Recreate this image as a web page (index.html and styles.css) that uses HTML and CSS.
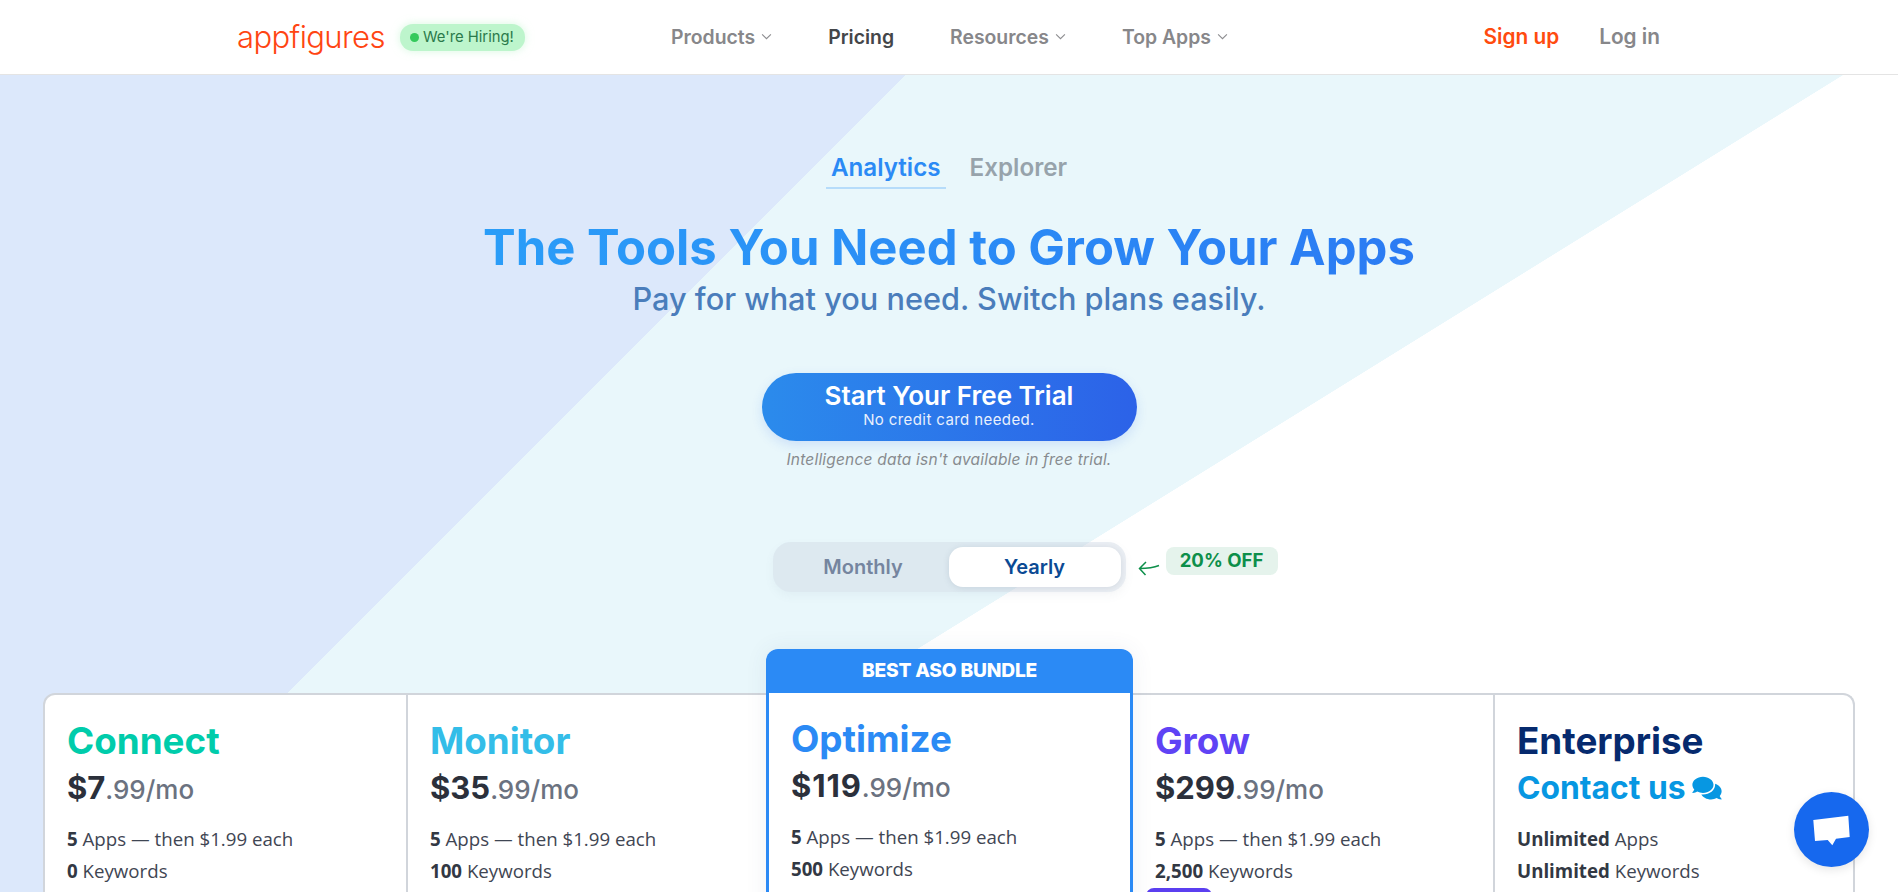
FILE: index.html
```html
<!DOCTYPE html>
<html lang="en">
<head>
<meta charset="utf-8">
<title>Appfigures Pricing</title>
<link rel="stylesheet" href="styles.css">
</head>
<body>
<header class="nav">
  <a class="logo">appfigures</a>
  <span class="hiring"><i class="hiring-dot"></i>We're Hiring!</span>
  <nav class="links">
    <a class="link">Products<svg class="chev" viewBox="0 0 10 6"><path d="M1 1l4 4 4-4"/></svg></a>
    <a class="link link-dark">Pricing</a>
    <a class="link">Resources<svg class="chev" viewBox="0 0 10 6"><path d="M1 1l4 4 4-4"/></svg></a>
    <a class="link">Top Apps<svg class="chev" viewBox="0 0 10 6"><path d="M1 1l4 4 4-4"/></svg></a>
  </nav>
  <div class="auth">
    <a class="link link-auth link-signup">Sign up</a>
    <a class="link link-auth">Log in</a>
  </div>
</header>
<main class="hero">
  <div class="tabs">
    <a class="tab tab-active">Analytics</a>
    <a class="tab">Explorer</a>
  </div>
  <h1 class="title">The Tools You Need to Grow Your Apps</h1>
  <p class="subtitle">Pay for what you need. Switch plans easily.</p>
  <a class="cta">
    <span class="cta-main">Start Your Free Trial</span>
    <span class="cta-sub">No credit card needed.</span>
  </a>
  <p class="note">Intelligence data isn't available in free trial.</p>
  <div class="toggle">
    <span class="opt">Monthly</span>
    <span class="opt opt-on">Yearly</span>
    <div class="off">
      <svg class="off-arrow" viewBox="0 0 22 16"><path d="M21 5.500C15 8 8 8.500 1.500 8.500M8 2L1.500 8.500 7.500 15"/></svg>
      <span class="off-badge">20% OFF</span>
    </div>
  </div>
  <section class="plans">
    <article class="plan">
      <h2 class="plan-name c-connect">Connect</h2>
      <p class="price"><b>$7</b>.99/mo</p>
      <ul class="feats">
        <li><b>5</b> Apps — then $1.99 each</li>
        <li><b>0</b> Keywords</li>
      </ul>
    </article>
    <article class="plan">
      <h2 class="plan-name c-monitor">Monitor</h2>
      <p class="price"><b>$35</b>.99/mo</p>
      <ul class="feats">
        <li><b>5</b> Apps — then $1.99 each</li>
        <li><b>100</b> Keywords</li>
      </ul>
    </article>
    <article class="plan plan-best">
      <div class="best-head">BEST ASO BUNDLE</div>
      <div class="best-body">
        <h2 class="plan-name c-optimize">Optimize</h2>
        <p class="price"><b>$119</b>.99/mo</p>
        <ul class="feats">
          <li><b>5</b> Apps — then $1.99 each</li>
          <li><b>500</b> Keywords</li>
        </ul>
      </div>
    </article>
    <article class="plan plan-after">
      <h2 class="plan-name c-grow">Grow</h2>
      <p class="price"><b>$299</b>.99/mo</p>
      <ul class="feats">
        <li><b>5</b> Apps — then $1.99 each</li>
        <li><b>2,500</b> Keywords</li>
      </ul>
      <span class="grow-tag"></span>
    </article>
    <article class="plan">
      <h2 class="plan-name c-ent">Enterprise</h2>
      <p class="contact">Contact us <svg class="contact-icon" viewBox="0 0 576 512"><path d="M416 192c0-88.400-93.100-160-208-160S0 103.600 0 192c0 34.300 14.100 65.900 38 92-13.400 30.200-35.500 54.200-35.800 54.500-2.200 2.300-2.800 5.700-1.500 8.700S4.800 352 8 352c36.600 0 66.900-12.300 88.700-25 32.200 15.700 70.300 25 111.300 25 114.900 0 208-71.600 208-160zm122 220c23.900-26 38-57.700 38-92 0-66.900-53.500-124.200-129.300-148.100.9 6.600 1.300 13.300 1.300 20.100 0 105.900-107.700 192-240 192-10.800 0-21.300-.8-31.700-1.900C207.800 439.600 281.800 480 368 480c41 0 79.100-9.200 111.300-25 21.800 12.700 52.100 25 88.700 25 3.200 0 6.100-1.900 7.300-4.800 1.300-2.900.7-6.300-1.500-8.700-.3-.3-22.400-24.200-35.800-54.500z"/></svg></p>
      <ul class="feats">
        <li><b>Unlimited</b> Apps</li>
        <li><b>Unlimited</b> Keywords</li>
      </ul>
    </article>
  </section>
</main>
<button class="chat" aria-label="Chat">
  <svg viewBox="0 0 75 75"><path d="M19.300 28L54.300 23.700 55.700 45 42 46.700 38.300 53.300 33.700 48 21 49z"/></svg>
</button>
</body>
</html>
```
FILE: styles.css
```css
* { box-sizing: border-box; }
html, body { margin: 0; height: 100%; overflow: hidden; }
body { font-family: Inter, "Liberation Sans", sans-serif; background: #fff; color: #374151; }
a { text-decoration: none; }
h1, h2, p, ul { margin: 0; padding: 0; }
ul { list-style: none; }

.nav {
  height: 75px;
  display: flex;
  align-items: center;
  padding: 0 238px 0 237px;
  background: #fff;
  border-bottom: 1px solid #e4e4e4;
}
.logo {
  font-family: Inter, sans-serif;
  font-weight: 350;
  font-size: 31px;
  letter-spacing: -0.6px;
  color: #ff4512;
  width: 148px;
  line-height: 36px;
}
.hiring {
  margin-left: 15px;
  height: 27px;
  width: 125px;
  display: flex;
  align-items: center;
  padding-left: 10px;
  border-radius: 13px;
  background: #bdf5cc;
  box-shadow: 0 0 8px rgba(189, 245, 204, .6);
  color: #2b7a4b;
  font-size: 14.8px;
  white-space: nowrap;
}
.hiring-dot { width: 9px; height: 9px; border-radius: 50%; background: #34c95c; margin-right: 4px; }
.links { display: flex; gap: 56px; margin-left: 146px; margin-top: -1px; }
.link { font-size: 19.4px; font-weight: 600; color: #87878a; display: flex; align-items: center; white-space: nowrap; }
.link-dark { color: #444649; }
.link-auth { font-size: 20.8px; }
.link-signup { color: #ff4b0f; }
.chev { width: 11px; height: 7px; margin-left: 6px; fill: none; stroke: #8d8d90; stroke-width: 1; }
.auth { margin-left: auto; display: flex; gap: 40px; margin-top: -1px; }

.hero {
  height: 817px;
  padding-top: 78px;
  display: flex;
  flex-direction: column;
  align-items: center;
  background:
    linear-gradient(135deg, #dce8fb 0, #dce8fb 640px, transparent 640.5px),
    linear-gradient(148.2deg, #e9f7fb 0, #e9f7fb 971px, transparent 971.5px),
    #fff;
}
.hero > * { flex: none; }
.tabs { display: flex; gap: 19px; }
.tab { font-size: 24.2px; font-weight: 600; color: #97a3ab; padding: 0 5px 6px; line-height: 30px; height: 36px; }
.tab-active { color: #2b8af5; border-bottom: 2px solid #b6dcfa; }
.title {
  margin-top: 29px;
  font-size: 49px;
  font-weight: 700;
  line-height: 60px;
  background: linear-gradient(90deg, #2a9df8, #2b7bf3);
  -webkit-background-clip: text;
  background-clip: text;
  color: transparent;
}
.subtitle { font-size: 30.7px; font-weight: 500; line-height: 36px; color: #4a7dbb; margin-top: 3px; }
.cta {
  margin-top: 56px;
  width: 375px;
  height: 68px;
  padding-bottom: 4px;
  border-radius: 34px;
  background: linear-gradient(90deg, #2b8bec, #2c62e8);
  box-shadow: 0 4px 12px rgba(43, 100, 232, .15);
  display: flex;
  flex-direction: column;
  align-items: center;
  justify-content: center;
  color: #fff;
}
.cta-main { font-size: 26px; font-weight: 600; line-height: 30px; }
.cta-sub { font-size: 15px; line-height: 18px; color: #e8f0fd; letter-spacing: .4px; }
.note { font-size: 15.5px; font-style: italic; color: #878b8f; line-height: 20px; margin-top: 9px; letter-spacing: .2px; }

.toggle {
  position: relative;
  margin-top: 72px;
  width: 353px;
  height: 50px;
  padding: 5px;
  border-radius: 18px;
  background: rgba(203, 213, 225, .4);
  display: grid;
  grid-template-columns: 171px 172px;
  align-items: stretch;
  box-shadow: 0 4px 10px rgba(100, 116, 139, .06);
}
.opt { display: flex; align-items: center; justify-content: center; font-size: 20px; font-weight: 600; color: #75859f; }
.opt-on { background: #fff; color: #0b4a94; border-radius: 14px; box-shadow: 0 1px 6px rgba(100, 116, 139, .18); }
.off { position: absolute; left: 365px; top: 5px; display: flex; align-items: flex-start; gap: 6px; }
.off-arrow { width: 22px; height: 16px; margin-top: 13px; fill: none; stroke: #0d8f4a; stroke-width: 1.5; }
.off-badge {
  width: 112px;
  height: 28px;
  border-radius: 8px;
  background: #e5f3ec;
  color: #0d8f4a;
  font-size: 18.6px;
  font-weight: 700;
  line-height: 26px;
  text-align: center;
}

.plans {
  margin-top: 101px;
  width: 1812px;
  height: 400px;
  display: grid;
  grid-template-columns: 361px 360px 367px 360px 360px;
  background: #fff;
  border: 2px solid #d1d5db;
  border-bottom: 0;
  border-radius: 12px 12px 0 0;
}
.plan { padding: 24px 22px 0; border-left: 2px solid #d1d5db; min-width: 0; }
.plan:first-child { border-left: 0; }
.plan-after { border-left: 0; }
.plan-best {
  border: 0;
  margin-top: -46px;
  padding: 0;
  position: relative;
  z-index: 1;
  background: #fff;
  border-radius: 12px 12px 0 0;
  box-shadow: 0 0 22px rgba(60, 80, 120, .08);
}
.best-head {
  height: 44px;
  background: #2b8af5;
  border-radius: 12px 12px 0 0;
  color: #fff;
  font-size: 19.2px;
  font-weight: 800;
  line-height: 42px;
  text-align: center;
  letter-spacing: -.2px;
}
.best-body { height: 400px; border: 3px solid #2b8af5; border-top: 0; padding: 24px 22px 0; }
.plan-name { font-size: 36.8px; font-weight: 700; line-height: 44px; }
.c-connect { color: #00ccab; }
.c-monitor { color: #33bde8; }
.c-optimize { color: #2b8af5; }
.c-grow { color: #5f43f5; }
.c-ent { color: #062a6e; }
.price { height: 44px; font-size: 26px; font-weight: 500; line-height: 44px; color: #6b7280; margin-top: 3px; }
.price b { font-size: 31px; font-weight: 700; color: #2b303b; }
.plan-best .price b { letter-spacing: .9px; }
.contact { font-size: 31.8px; font-weight: 700; line-height: 44px; color: #0797e2; margin-top: 3px; display: flex; align-items: center; gap: 6px; }
.contact-icon { width: 30px; height: 26px; fill: #0797e2; }
.feats { margin-top: 13px; font-family: "Open Sans", "Liberation Sans", sans-serif; font-size: 18.7px; line-height: 32px; color: #3f4653; }
.feats b { font-weight: 700; color: #323843; }
.grow-tag { display: block; width: 66px; height: 20px; margin-top: 1px; margin-left: -9px; border-radius: 8px 8px 0 0; background: #5b3ff0; }

.chat {
  position: fixed;
  left: 1794px;
  top: 792px;
  width: 75px;
  height: 75px;
  padding: 0;
  border: 0;
  border-radius: 50%;
  background: #1668ee;
  box-shadow: 0 3px 10px rgba(0, 0, 0, .1);
  z-index: 5;
}
.chat svg { display: block; width: 75px; height: 75px; fill: #fff; }
```
